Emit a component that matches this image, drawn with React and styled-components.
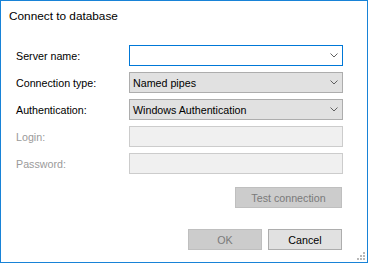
import React from "react";
import styled, { createGlobalStyle } from "styled-components";

const GlobalStyle = createGlobalStyle`
  html, body {
    margin: 0;
    padding: 0;
    background: #ffffff;
  }
  * {
    box-sizing: border-box;
  }
`;

const Window = styled.div`
  position: relative;
  width: 368px;
  height: 263px;
  border: 1px solid #1883d7;
  background: #ffffff;
  display: flex;
  flex-direction: column;
  font-family: "Liberation Sans", Arial, sans-serif;
  color: #000000;
`;

const TitleBar = styled.div`
  height: 29px;
  display: flex;
  align-items: center;
  padding-left: 8px;
  font-size: 11.8px;
`;

const Body = styled.div`
  padding: 15px 24px 0 15px;
  display: flex;
  flex-direction: column;
`;

const Form = styled.div`
  display: grid;
  grid-template-columns: 113px 214px;
  grid-auto-rows: 21px;
  row-gap: 6px;
`;

const Label = styled.div`
  display: flex;
  align-items: center;
  font-size: 10.7px;
  color: ${(p) => (p.disabled ? "#9a9a9a" : "#000000")};
`;

const Combo = styled.div`
  display: flex;
  align-items: center;
  justify-content: space-between;
  padding: 0 4px 0 3px;
  font-size: 10.7px;
  border: 1px solid ${(p) => (p.focused ? "#0078d7" : "#adadad")};
  background: ${(p) => (p.focused ? "#ffffff" : "#e1e1e1")};
`;

const TextBox = styled.div`
  border: 1px solid #cccccc;
  background: #f0f0f0;
`;

const ButtonRow = styled.div`
  display: flex;
  justify-content: flex-end;
  gap: 6px;
  padding-right: 1px;
  margin-top: ${(p) => p.top}px;
`;

const Button = styled.div`
  width: ${(p) => p.w}px;
  height: 21px;
  display: flex;
  align-items: center;
  justify-content: center;
  font-size: 10.7px;
  border: 1px solid ${(p) => (p.disabled ? "#bfbfbf" : "#adadad")};
  background: ${(p) => (p.disabled ? "#cccccc" : "#e1e1e1")};
  color: ${(p) => (p.disabled ? "#7a7a7a" : "#000000")};
`;

const Grip = styled.svg`
  position: absolute;
  right: 2px;
  bottom: 2px;
`;

const Chevron = () => (
  <svg width="8" height="5" viewBox="0 0 8 5">
    <polyline points="0.5,0.5 4,4 7.5,0.5" fill="none" stroke="#606060" strokeWidth="1" />
  </svg>
);

const gripDots = [
  [6, 0],
  [3, 3],
  [6, 3],
  [0, 6],
  [3, 6],
  [6, 6],
];

const App = () => {
  return (
    <>
      <GlobalStyle />
      <Window>
        <TitleBar>Connect to database</TitleBar>
        <Body>
          <Form>
            <Label>Server name:</Label>
            <Combo focused>
              <span></span>
              <Chevron />
            </Combo>
            <Label>Connection type:</Label>
            <Combo>
              <span>Named pipes</span>
              <Chevron />
            </Combo>
            <Label>Authentication:</Label>
            <Combo>
              <span>Windows Authentication</span>
              <Chevron />
            </Combo>
            <Label disabled>Login:</Label>
            <TextBox />
            <Label disabled>Password:</Label>
            <TextBox />
          </Form>
          <ButtonRow top={13}>
            <Button w={107} disabled>
              Test connection
            </Button>
          </ButtonRow>
          <ButtonRow top={21}>
            <Button w={74} disabled>
              OK
            </Button>
            <Button w={74}>Cancel</Button>
          </ButtonRow>
        </Body>
        <Grip width="8" height="8" viewBox="0 0 8 8">
          {gripDots.map(([x, y]) => (
            <rect key={`${x}-${y}`} x={x} y={y} width="2" height="2" fill="#b8b8b8" />
          ))}
        </Grip>
      </Window>
    </>
  );
};

export default App;
